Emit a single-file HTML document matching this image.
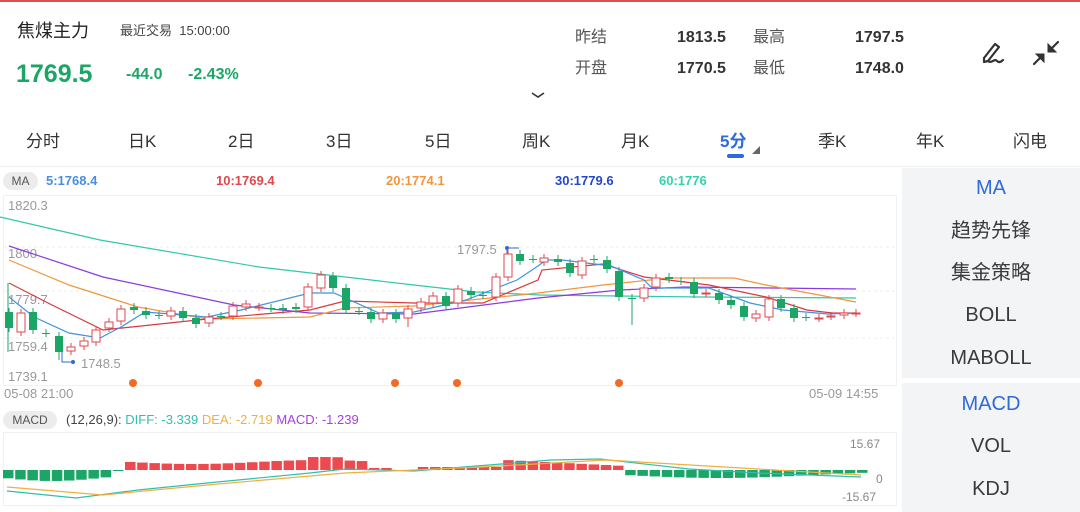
<!DOCTYPE html>
<html><head><meta charset="utf-8"><style>
*{margin:0;padding:0;box-sizing:border-box}
body{width:1080px;height:512px;overflow:hidden;background:#fff;font-family:"Liberation Sans","Noto Sans CJK SC",sans-serif;color:#333;position:relative}
.a{position:absolute;white-space:nowrap}
.q{line-height:20px}
.tab{position:absolute;top:127px;font-size:17px;color:#333}
.rp{position:absolute;left:902px;width:178px;background:#f3f4f6}
.ri{position:absolute;left:0;width:178px;text-align:center;font-size:20px;line-height:24px;color:#3a3a3a}
</style></head><body>
<div class="a" style="left:0;top:0;width:1080px;height:2px;background:#d9534f"></div>
<div class="a" style="left:17px;top:17px;font-size:18px;color:#222">焦煤主力</div>
<div class="a" style="left:120px;top:20px;font-size:13px;color:#444">最近交易&nbsp; 15:00:00</div>
<div class="a" style="left:16px;top:60px;font-size:25px;font-weight:bold;color:#1ba567">1769.5</div>
<div class="a" style="left:126px;top:66px;font-size:16px;font-weight:bold;color:#1ba567">-44.0</div>
<div class="a" style="left:188px;top:66px;font-size:16px;font-weight:bold;color:#1ba567">-2.43%</div>
<div class="a q" style="left:575px;top:28px;font-size:16px;color:#555">昨结</div>
<div class="a q" style="left:677px;top:28px;font-size:16px;font-weight:bold;color:#333">1813.5</div>
<div class="a q" style="left:753px;top:28px;font-size:16px;color:#555">最高</div>
<div class="a q" style="left:855px;top:28px;font-size:16px;font-weight:bold;color:#333">1797.5</div>
<div class="a q" style="left:575px;top:59px;font-size:16px;color:#555">开盘</div>
<div class="a q" style="left:677px;top:59px;font-size:16px;font-weight:bold;color:#333">1770.5</div>
<div class="a q" style="left:753px;top:59px;font-size:16px;color:#555">最低</div>
<div class="a q" style="left:855px;top:59px;font-size:16px;font-weight:bold;color:#333">1748.0</div>
<svg class="a" style="left:978px;top:38px" width="30" height="30" viewBox="0 0 30 30" fill="none" stroke="#333" stroke-width="2.2" stroke-linecap="round" stroke-linejoin="round"><path d="M6 20 L17 6 L21 9 L10 23 L6 24 Z"/><path d="M10 23 C14 26 16 20 19 23 C21 25 23 24 25 22"/></svg>
<svg class="a" style="left:1030px;top:38px" width="32" height="30" viewBox="0 0 32 30" fill="#333" stroke="#333" stroke-width="2.2" stroke-linecap="round"><path d="M28 4 L20 12" /><path d="M18 6 L18 14 L26 14 Z" stroke-width="1"/><path d="M4 26 L12 18"/><path d="M14 24 L14 16 L6 16 Z" stroke-width="1"/></svg>
<svg class="a" style="left:531px;top:92px" width="14" height="8"><path d="M1 1 L7 5 L13 1" stroke="#333" stroke-width="1.6" fill="none"/></svg>
<div class="tab" style="left:26px">分时</div>
<div class="tab" style="left:128px">日K</div>
<div class="tab" style="left:228px">2日</div>
<div class="tab" style="left:326px">3日</div>
<div class="tab" style="left:425px">5日</div>
<div class="tab" style="left:522px">周K</div>
<div class="tab" style="left:621px">月K</div>
<div class="tab" style="left:720px;color:#2f6ad9;font-weight:bold">5分</div>
<div class="a" style="left:727px;top:154px;width:17px;height:4px;border-radius:2px;background:#2f6ad9"></div>
<svg class="a" style="left:752px;top:146px" width="8" height="8"><path d="M8 0 L8 8 L0 8 Z" fill="#666"/></svg>
<div class="tab" style="left:818px">季K</div>
<div class="tab" style="left:916px">年K</div>
<div class="tab" style="left:1013px">闪电</div>
<div class="a" style="left:0;top:166px;width:1080px;height:1px;background:#eee"></div>
<div class="a" style="left:3px;top:172px;width:35px;height:18px;border-radius:9px;background:#ececec;font-size:12px;color:#555;text-align:center;line-height:18px">MA</div>
<div class="a" style="left:46px;top:173px;font-size:13px;font-weight:bold;color:#4a8fe0">5:1768.4</div>
<div class="a" style="left:216px;top:173px;font-size:13px;font-weight:bold;color:#e0474c">10:1769.4</div>
<div class="a" style="left:386px;top:173px;font-size:13px;font-weight:bold;color:#f0963e">20:1774.1</div>
<div class="a" style="left:555px;top:173px;font-size:13px;font-weight:bold;color:#2447c8">30:1779.6</div>
<div class="a" style="left:659px;top:173px;font-size:13px;font-weight:bold;color:#2fd3b0">60:1776</div>
<svg class="a" style="left:0;top:0" width="900" height="512">
<rect x="3.5" y="195.5" width="893" height="190" fill="none" stroke="#f0f0f0"/>
<g stroke="#eee" stroke-dasharray="3 3"><line x1="4" y1="247" x2="896" y2="247"/><line x1="4" y1="291" x2="896" y2="291"/><line x1="4" y1="338" x2="896" y2="338"/></g>
<g font-size="13" fill="#999" font-family="Liberation Sans,sans-serif">
<text x="8" y="210">1820.3</text><text x="8" y="258">1800</text><text x="8" y="304">1779.7</text><text x="8" y="351">1759.4</text><text x="8" y="381">1739.1</text>
<text x="81" y="368">1748.5</text><text x="457" y="254">1797.5</text>
<text x="4" y="398">05-08 21:00</text><text x="809" y="398">05-09 14:55</text></g>
<path d="M62 352 L62 362 L73 362" stroke="#2f6ad9" fill="none"/><circle cx="73" cy="362" r="2" fill="#2f6ad9"/>
<path d="M507 254 L507 248 L519 248" stroke="#2f6ad9" fill="none"/><circle cx="507" cy="248" r="2" fill="#2f6ad9"/>
<g fill="none" stroke-width="1.2">
<polyline stroke="#2fc9a8" points="0,217 100,240 259,267 414,285 476,292 540,295 620,296 700,297 856,298"/>
<polyline stroke="#8a3be0" points="9,246 103,277 234,305 310,313 414,314 538,298 620,290 685,287 856,289"/>
<polyline stroke="#f0963e" points="9,260 69,285 138,307 207,319 310,317 345,308 414,306 538,293 603,285 669,278 734,278 766,285 856,302"/>
<polyline stroke="#d9383e" points="9,283 52,305 103,330 207,319 310,310 345,301 414,303 483,303 538,280 542,270 603,264 644,277 709,285 766,297 807,310 832,313 856,313"/>
<polyline stroke="#3f93e0" points="9,297 34,317 69,333 100,338 121,327 145,312 207,317 241,310 310,293 334,293 379,313 414,312 466,300 517,280 538,266 546,260 562,260 611,266 644,280 652,288 709,288 750,303 783,310 828,314 856,313"/>
</g>
<line x1="8" y1="283" x2="8" y2="352" stroke="#1ba567"/>
<g id="c"></g>
<g fill="#f26a23"><circle cx="133" cy="383" r="4"/><circle cx="258" cy="383" r="4"/><circle cx="395" cy="383" r="4"/><circle cx="457" cy="383" r="4"/><circle cx="619" cy="383" r="4"/></g>
<rect x="3.5" y="432.5" width="893" height="73" fill="none" stroke="#f0f0f0"/>
<g id="m"></g>
<g fill="none" stroke-width="1.2">
<polyline stroke="#2fbfb0" points="7,491 76,498 138,490 207,483 310,473 345,469 414,471 551,460 600,459 689,469 758,473 861,477"/>
<polyline stroke="#f0b040" points="7,487 103,495 207,485 345,473 482,467 606,460 758,469 861,475"/>
</g>
<g font-size="12" fill="#888" font-family="Liberation Sans,sans-serif"><text x="850" y="448">15.67</text><text x="876" y="483">0</text><text x="842" y="501">-15.67</text></g>
</svg>
<div class="a" style="left:3px;top:411px;width:54px;height:18px;border-radius:9px;background:#ececec;font-size:12px;color:#555;text-align:center;line-height:18px">MACD</div>
<div class="a" style="left:66px;top:412px;font-size:13px;color:#444">(12,26,9): <span style="color:#2fbfb0">DIFF: -3.339</span> <span style="color:#f0b040">DEA: -2.719</span> <span style="color:#a640e0">MACD: -1.239</span></div>
<div class="rp" style="top:168px;height:210px"></div>
<div class="rp" style="top:383px;height:129px"></div>
<div class="ri" style="left:902px;top:176px;color:#2f6ad9">MA</div>
<div class="ri" style="left:902px;top:219px">趋势先锋</div>
<div class="ri" style="left:902px;top:261px">集金策略</div>
<div class="ri" style="left:902px;top:303px">BOLL</div>
<div class="ri" style="left:902px;top:346px">MABOLL</div>
<div class="ri" style="left:902px;top:392px;color:#2f6ad9">MACD</div>
<div class="ri" style="left:902px;top:434px">VOL</div>
<div class="ri" style="left:902px;top:477px">KDJ</div>
<script>
var C=[[9,312,328,'g'],[21,313,332,'r'],[33,312,330,'g'],[46,333,333,'g'],[59,336,352,'g'],[71,347,351,'r'],[84,341,346,'r'],[96,330,342,'r'],[109,322,328,'r'],[121,309,321,'r'],[134,307,310,'g'],[146,311,315,'g'],[159,315,315,'g'],[171,311,316,'r'],[183,311,318,'g'],[196,318,324,'g'],[209,317,323,'r'],[221,316,316,'g'],[233,306,316,'r'],[246,304,307,'r'],[259,307,307,'r'],[271,308,308,'g'],[283,308,310,'g'],[296,307,309,'g'],[308,287,307,'r'],[321,275,288,'r'],[333,276,288,'g'],[346,288,310,'g'],[359,311,311,'g'],[371,312,319,'g'],[383,313,319,'r'],[396,313,319,'g'],[408,309,318,'r'],[421,302,308,'r'],[433,296,303,'r'],[446,296,306,'g'],[458,289,303,'r'],[471,291,295,'g'],[483,295,295,'g'],[496,277,297,'r'],[508,254,277,'r'],[520,254,261,'g'],[533,259,259,'g'],[544,258,262,'r'],[558,259,262,'g'],[570,263,273,'g'],[582,261,275,'r'],[594,259,259,'g'],[607,260,269,'g'],[619,271,297,'g'],[632,298,298,'g'],[644,288,298,'r'],[656,278,287,'r'],[669,277,279,'g'],[681,281,281,'g'],[694,282,294,'g'],[706,293,293,'r'],[719,293,300,'g'],[731,300,305,'g'],[744,306,317,'g'],[756,314,318,'r'],[769,299,317,'r'],[781,299,308,'g'],[794,308,318,'g'],[806,317,317,'g'],[819,318,318,'r'],[831,316,316,'r'],[844,313,315,'r'],[856,313,313,'r']];
var s='';C.forEach(function(c){var col=c[3]=='g'?'#1ba567':'#e0474c';var h=Math.max(c[2]-c[1],1);var lo=c[2]+4,hi=c[1]-4;if(c[0]==632)lo=325;if(c[0]==408)lo=327;if(c[0]==59)lo=360;
s+='<line x1="'+c[0]+'" y1="'+hi+'" x2="'+c[0]+'" y2="'+lo+'" stroke="'+col+'"/>';
if(c[3]=='g')s+='<rect x="'+(c[0]-4)+'" y="'+c[1]+'" width="8" height="'+h+'" fill="'+col+'"/>';
else s+='<rect x="'+(c[0]-4)+'" y="'+c[1]+'" width="8" height="'+h+'" fill="#fff" stroke="'+col+'"/>';});
document.getElementById('c').innerHTML=s;
var m='';for(var x=3;x<862;x+=12.2){var v;
if(x<105)v=-(8+3*Math.sin(x/30));else if(x<116)v=-1;else if(x<365)v=8+2*Math.sin(x/40)+(x>300&&x<340?3:0);else if(x<412)v=x<388?2:-1;else if(x<500)v=3;else if(x<615)v=10-(x-500)/20;else if(x<622)v=1;else v=-(5+3*Math.sin((x-620)/60));
var y0=470,h=Math.abs(v);m+='<rect x="'+x+'" y="'+(v>0?y0-h:y0)+'" width="10.5" height="'+Math.max(h,1)+'" fill="'+(v>0?'#ec4a4f':'#1ba567')+'"/>';}
document.getElementById('m').innerHTML=m;
</script>
</body></html>
